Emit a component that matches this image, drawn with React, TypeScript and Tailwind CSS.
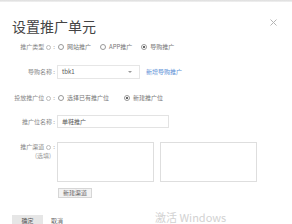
import React from "react";

const FONT = { fontFamily: '"Noto Sans CJK SC", "Noto Sans", sans-serif' };

function Info() {
  return (
    <span className="inline-flex items-center justify-center w-[5px] h-[5px] rounded-full border border-[#bbb] mx-[2px]" />
  );
}

function Radio({ label, checked }: { label: string; checked?: boolean }) {
  return (
    <span className="inline-flex items-center gap-[3px]">
      <span className="w-[6px] h-[6px] rounded-full border border-[#999] bg-white flex items-center justify-center">
        {checked && <span className="w-[2px] h-[2px] rounded-full bg-[#333]" />}
      </span>
      <span className="text-[#777]">{label}</span>
    </span>
  );
}

function Label({ children }: { children: React.ReactNode }) {
  return <div className="w-[55px] shrink-0 flex items-center justify-end text-[#888]">{children}</div>;
}

export default function App() {
  return (
    <div className="relative w-[292px] h-[224px] bg-white overflow-hidden text-[6px] leading-[8px]" style={FONT}>
      <div className="h-[2px] bg-gradient-to-b from-[#dcdcdc] to-[#f2f2f2]" />
      <div className="flex justify-between items-start pl-[12px] pr-[15px] pt-[17px]">
        <h1 className="text-[14px] leading-[14px] text-[#444] font-normal">设置推广单元</h1>
        <svg width="7" height="7" viewBox="0 0 7 7">
          <path d="M0.5 0.5 L6.5 6.5 M6.5 0.5 L0.5 6.5" stroke="#b5b5b5" strokeWidth="1" />
        </svg>
      </div>

      <div className="mt-[8px] h-[12px] flex items-center gap-[2px]">
        <Label>推广类型<Info />:</Label>
        <div className="flex items-center gap-[9px] ml-[1px]">
          <Radio label="网站推广" />
          <Radio label="APP推广" />
          <Radio label="导购推广" checked />
        </div>
      </div>

      <div className="mt-[12px] h-[14px] flex items-center gap-[2px]">
        <Label>导购名称 :</Label>
        <div className="w-[83px] h-[14px] border border-[#e6e6e6] flex items-center justify-between pl-[4px] pr-[7px] text-[#555]">
          <span>tbk1</span>
          <span className="w-0 h-0 border-l-[2px] border-r-[2px] border-t-[2px] border-l-transparent border-r-transparent border-t-[#999]" />
        </div>
        <span className="ml-[4px] text-[#5b8fd6]">新增导购推广</span>
      </div>

      <div className="mt-[13px] h-[12px] flex items-center gap-[2px]">
        <Label>投放推广位<Info />:</Label>
        <div className="flex items-center gap-[15px] ml-[1px]">
          <Radio label="选择已有推广位" />
          <Radio label="新建推广位" checked />
        </div>
      </div>

      <div className="mt-[11px] h-[13px] flex items-center gap-[2px]">
        <Label>推广位名称 :</Label>
        <div className="w-[112px] h-[13px] border border-[#e3e3e3] flex items-center pl-[4px] text-[#555]">单鞋推广</div>
      </div>

      <div className="mt-[14px] flex gap-[2px]">
        <div className="w-[55px] shrink-0 flex flex-col items-end text-[#888] pt-[1px]">
          <div className="flex items-center">推广渠道<Info />:</div>
          <div className="mr-[4px] mt-[1px] text-[#999]">(选填)</div>
        </div>
        <div className="flex flex-col">
          <div className="flex gap-[6px]">
            <div className="w-[97px] h-[40px] border border-[#dedede]" />
            <div className="w-[97px] h-[40px] border border-[#dedede]" />
          </div>
          <div className="mt-[6px] ml-[1px] w-[34px] h-[10px] border border-[#d6d6d6] bg-[#f3f3f3] flex items-center justify-center text-[#666]">新建渠道</div>
        </div>
      </div>

      <div className="mt-[17px] ml-[12px] flex items-center gap-[8px]">
        <div className="w-[31px] h-[12px] bg-[#e6e6e6] flex items-center justify-center text-[#555]">确定</div>
        <span className="text-[#666]">取消</span>
      </div>

      <div className="absolute left-[155px] top-[211px] text-[11px] leading-[13px] text-[#d2d2d2]">激活 Windows</div>
    </div>
  );
}
